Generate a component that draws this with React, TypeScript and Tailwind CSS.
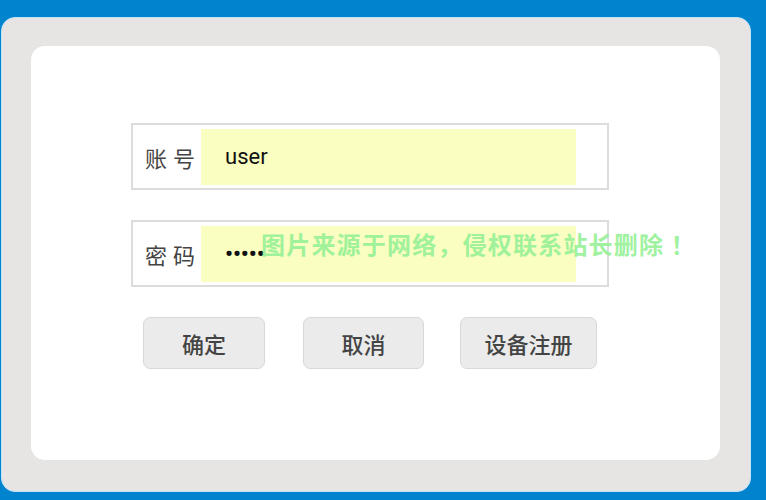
import React from "react";

const cjk = { fontFamily: '"Noto Sans CJK SC", "Noto Sans", sans-serif' };
const latin = { fontFamily: 'Roboto, "Noto Sans CJK SC", sans-serif' };

function Field({ label, children }: { label: string; children: React.ReactNode }) {
  return (
    <div className="w-[478px] h-[67px] border-2 border-[#dcdcdc] bg-white flex items-center pl-[12px]">
      <div className="w-[56px] shrink-0 whitespace-nowrap text-[22px] leading-none text-[#444] tracking-[6px]" style={cjk}>
        {label}
      </div>
      <div className="w-[375px] shrink-0 h-[56px] bg-[#fafec0] flex items-center pl-[24px]">{children}</div>
    </div>
  );
}

function Btn({ w, children }: { w: string; children: React.ReactNode }) {
  return (
    <div
      className={`${w} h-[52px] rounded-[7px] border border-[#d9d9d9] bg-[#ebebeb] flex items-center justify-center text-[22px] font-medium text-[#444]`}
      style={cjk}
    >
      {children}
    </div>
  );
}

export default function App() {
  return (
    <div className="w-[766px] h-[500px] bg-[#0283cd] pt-[17px] pl-[1px] overflow-hidden relative">
      <div className="w-[750px] h-[475px] bg-[#e6e5e3] rounded-[14px] border border-[#c4e4f7] pl-[29px] pt-[28px]">
        <div className="w-[689px] h-[414px] bg-white rounded-[14px] pt-[77px] pl-[100px]">
          <div className="flex flex-col gap-[30px]">
            <Field label="账号">
              <span className="text-[22px] text-[#111]" style={latin}>user</span>
            </Field>
            <Field label="密码">
              <span className="text-[22px] text-[#111] font-bold" style={latin}>•••••</span>
            </Field>
          </div>
          <div className="flex mt-[30px] pl-[12px]">
            <Btn w="w-[122px]">确定</Btn>
            <div className="w-[38px]" />
            <Btn w="w-[121px]">取消</Btn>
            <div className="w-[36px]" />
            <Btn w="w-[137px]">设备注册</Btn>
          </div>
        </div>
      </div>
      <div
        className="absolute left-[261px] top-[229px] text-[24px] leading-[30px] font-bold text-[#96f196] opacity-90 whitespace-nowrap tracking-[1.2px]"
        style={cjk}
      >
        图片来源于网络，侵权联系站长删除 ！
      </div>
    </div>
  );
}
